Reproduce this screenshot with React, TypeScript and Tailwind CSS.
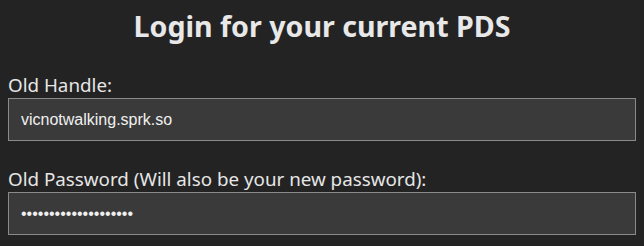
import React from 'react';

const App: React.FC = () => {
  return (
    <div className="min-h-screen bg-[#232323] px-2 pt-2 font-['Noto_Sans',sans-serif] text-[#e6e6e6]">
      <h1 className="text-center text-[28.6px] font-bold leading-[36px] text-[#e8e8e8]">Login for your current PDS</h1>

      <form className="mt-[30px]">
        <label htmlFor="old-handle" className="block text-[18.8px] leading-[22px]">Old Handle:</label>
        <input
          id="old-handle"
          type="text"
          defaultValue="vicnotwalking.sprk.so"
          className="mt-[2px] block h-[43px] w-full border border-[#8a8a8a] bg-[#3a3a3a] px-3 font-['Liberation_Sans',sans-serif] text-[16px] text-[#f0f0f0] outline-none"
        />

        <label htmlFor="old-password" className="mt-[27px] block text-[18.8px] leading-[22px]">
          Old Password (Will also be your new password):
        </label>
        <input
          id="old-password"
          type="password"
          defaultValue="vicnotwalking1234567"
          className="mt-[2px] block h-[43px] w-full border border-[#8a8a8a] bg-[#3a3a3a] px-3 font-['Liberation_Sans',sans-serif] text-[16px] text-[#f0f0f0] outline-none"
        />
      </form>
    </div>
  );
};

export default App;
